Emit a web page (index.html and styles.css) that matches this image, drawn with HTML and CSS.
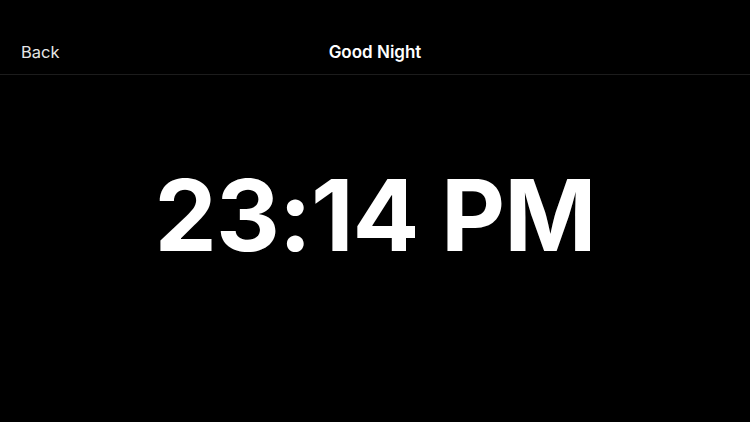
FILE: index.html
```html
<!DOCTYPE html>
<html>
<head>
    <link rel="stylesheet" href="styles.css">
</head>
<body>
<div class="navbar">
    <a class="back" href="#">Back</a>
    <div class="title">Good Night</div>
    <div class="spacer"></div>
</div>
<div class="clock">
    <div class="time">23:14 PM</div>
</div>
</body>
</html>
```

FILE: styles.css
```css
*{
    font-family: Inter, 'Noto Sans', sans-serif;
    box-sizing: border-box;
}
body{
    margin: 0;
    background-color: #000;
    color: #fff;
    height: 422px;
    overflow: hidden;
}
.navbar{
    display: flex;
    align-items: center;
    height: 75px;
    padding: 30px 21px 0;
    border-bottom: 1px solid #1c1c1c;
}
.back{
    flex: 1;
    color: #e6e6e6;
    text-decoration: none;
    font-size: 16.5px;
}
.title{
    font-size: 17px;
    font-weight: 600;
}
.spacer{
    flex: 1;
}
.clock{
    display: flex;
    justify-content: center;
    padding-top: 91px;
}
.time{
    font-size: 99px;
    font-weight: 700;
    line-height: 1;
    letter-spacing: -1px;
}
```
